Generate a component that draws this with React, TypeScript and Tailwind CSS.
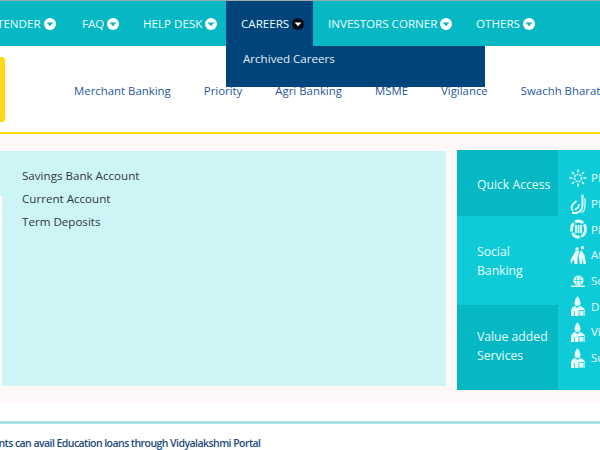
const font = { fontFamily: '"Open Sans", sans-serif' };

function Caret({ dark }: { dark?: boolean }) {
  return (
    <svg width="12" height="12" viewBox="0 0 12 12" className="ml-[3px] shrink-0">
      <circle cx="6" cy="6" r="6" fill={dark ? '#0b0b14' : '#ffffff'} />
      <path d="M2.6 4.6h6.8L6 8.2z" fill={dark ? '#ffffff' : '#06b8c4'} />
    </svg>
  );
}

function NavItem({ label, w, active }: { label: string; w: string; active?: boolean }) {
  return (
    <div className={`flex items-center h-[45px] pl-[15px] shrink-0 ${w} ${active ? 'bg-[#00447c]' : ''}`}>
      <span>{label}</span>
      <Caret dark={active} />
    </div>
  );
}

function Sun() {
  return (
    <svg width="18" height="18" viewBox="0 0 18 18" fill="none" stroke="#e8fbfc" strokeWidth="1.5">
      <circle cx="9" cy="9" r="3.6" strokeDasharray="2 1" />
      <path d="M9 0.500v3M9 14.500v3M0.500 9h3M14.500 9h3M3 3l2.200 2.200M12.800 12.800L15 15M15 3l-2.200 2.200M5.200 12.800L3 15" />
    </svg>
  );
}

function Hand() {
  return (
    <svg width="16" height="20" viewBox="0 0 16 20" fill="none" stroke="#e8fbfc" strokeWidth="2">
      <path d="M12.500 0.500V11c0 4-2 7-6 8H2" />
      <path d="M6.500 7C4 9 1.500 11 1.500 14c0 1 .5 2 1.500 3" strokeWidth="1.700" />
      <path d="M15 4v8c0 3-1 5-3 7" strokeWidth="1.200" />
      <path d="M9 10c0 3-2 5-4.500 5.500" strokeWidth="1.500" />
    </svg>
  );
}

function Ring() {
  return (
    <svg width="17" height="20" viewBox="0 0 17 20" fill="none">
      <ellipse cx="8.500" cy="10" rx="7" ry="8" stroke="#e8fbfc" strokeWidth="2.800" strokeDasharray="9 1.500" />
      <path d="M5 6h7v8H5z" fill="#e8fbfc" />
      <path d="M7.300 6v8M9.700 6v8" stroke="#0fcbd8" strokeWidth=".8" />
    </svg>
  );
}

function Elders() {
  return (
    <svg width="17" height="18" viewBox="0 0 17 18" fill="#e8fbfc">
      <circle cx="7" cy="3" r="1.700" />
      <circle cx="12.500" cy="1.800" r="1.700" />
      <path d="M5.500 5 0.500 14l.5 4 3-5 .5 5h3L7.500 11l2-6zM11 4 8.500 10l1.500 8h2l.5-6 1 6h2.500l-1.500-9z" />
    </svg>
  );
}

function Coin() {
  return (
    <svg width="14" height="14" viewBox="0 0 14 14" fill="#e8fbfc">
      <circle cx="7.500" cy="6.500" r="5" />
      <path d="M5.800 2.500v8M9.200 2.500v8M3.500 6.500h8" stroke="#0fcbd8" strokeWidth=".7" />
      <rect x="0" y="11.500" width="14" height="1.500" rx=".7" />
    </svg>
  );
}

function Person() {
  return (
    <svg width="14" height="20" viewBox="0 0 14 20" fill="#e8fbfc">
      <path d="M4 4 6.500 0 9 4v1H4z" />
      <circle cx="6.500" cy="7" r="3" />
      <path d="M0 20v-5c0-2.800 2-4.500 4-5l2.500 2L9 10c2 .5 5 2.200 5 5v5z" />
      <path d="M3.500 15v5M8 14.500h5v5.500H8z" stroke="#0fcbd8" strokeWidth=".8" fill="none" />
    </svg>
  );
}

const services = [
  { icon: <Sun />, text: 'PMJDY' },
  { icon: <Hand />, text: 'PMJJBY' },
  { icon: <Ring />, text: 'PMSBY' },
  { icon: <Elders />, text: 'Atal Pension' },
  { icon: <Coin />, text: 'Sovereign Gold' },
  { icon: <Person />, text: 'Digital Banking' },
  { icon: <Person />, text: 'Vidya Scheme' },
  { icon: <Person />, text: 'Sukanya Scheme' },
];

export default function App() {
  return (
    <div className="relative w-[600px] h-[450px] overflow-hidden bg-white" style={font}>
      {/* Top nav */}
      <div className="h-px bg-[#a3b4b6]" />
      <div className="flex h-[45px] -ml-[18px] bg-[#06b8c4] text-[#eefcfd] text-[11.6px] shadow-[0_1px_3px_rgba(0,0,0,0.25)]">
        <NavItem label="TENDER" w="w-[85px]" />
        <NavItem label="FAQ" w="w-[61px]" />
        <NavItem label="HELP DESK" w="w-[98px]" />
        <NavItem label="CAREERS" w="w-[87px]" active />
        <NavItem label="INVESTORS CORNER" w="w-[148px]" />
        <NavItem label="OTHERS" w="w-[90px]" />
      </div>

      {/* Careers dropdown */}
      <div className="absolute left-[226px] top-[46px] w-[259px] h-[41px] bg-[#00447c] text-[#e6eef5] text-[11.6px] pl-[17px] pt-[4px]">
        Archived Careers
      </div>

      {/* Header */}
      <div className="flex h-[86px] bg-white border-b-[2px] border-[#ffd814] box-content">
        <div className="w-[5px] h-[65px] mt-[11px] rounded-r-[3px] bg-[#ffd814] shrink-0" />
        <div className="flex gap-[33px] pl-[69px] pt-[36px] text-[11.4px] text-[#27579d] whitespace-nowrap leading-[18px]">
          <span>Merchant Banking</span>
          <span>Priority</span>
          <span>Agri Banking</span>
          <span>MSME</span>
          <span>Vigilance</span>
          <span>Swachh Bharat</span>
        </div>
      </div>

      {/* Main */}
      <div className="flex h-[269px] bg-[#fff8f8] pt-[17px]">
        <div className="relative w-[446px] h-[235px] bg-[#cdf5f6] pl-[22px] pt-[13px] text-[11.6px] leading-[23px] text-[#2f3740]">
          <p>Savings Bank Account</p>
          <p>Current Account</p>
          <p>Term Deposits</p>
          <div className="absolute left-0 top-[45px] bottom-0 w-[2px] bg-white" />
        </div>
        <div className="flex ml-[11px] w-[143px] h-[240px] bg-[#0fcbd8] text-[#e8fbfc] text-[12.2px] leading-[19px] -mt-px">
          <div className="flex flex-col w-[101px] shrink-0">
            <div className="flex items-center h-[66px] pl-[20px] pt-[2px] bg-[#06b8c4]">Quick Access</div>
            <div className="flex items-center h-[89px] pl-[20px]">
              <span>Social<br />Banking</span>
            </div>
            <div className="flex items-center h-[85px] pl-[20px] pb-[3px] bg-[#06b8c4]">
              <span>Value added<br />Services</span>
            </div>
          </div>
          <div className="flex flex-col pl-[11px] pt-[15px] whitespace-nowrap text-[11.5px]">
            {services.map((s) => (
              <div key={s.text} className="flex items-center h-[25.7px] gap-[4px]">
                <span className="flex items-center justify-center w-[18px] shrink-0">{s.icon}</span>
                <span>{s.text}</span>
              </div>
            ))}
          </div>
        </div>
      </div>

      {/* Ticker */}
      <div className="h-[18px] bg-white" />
      <div className="h-[3px] bg-[#a8e2e8]" />
      <div className="-ml-[28px] pt-[12px] text-[10.5px] font-semibold tracking-[-0.55px] text-[#1d4a7d] whitespace-nowrap">
        Students can avail Education loans through Vidyalakshmi Portal
      </div>
    </div>
  );
}
